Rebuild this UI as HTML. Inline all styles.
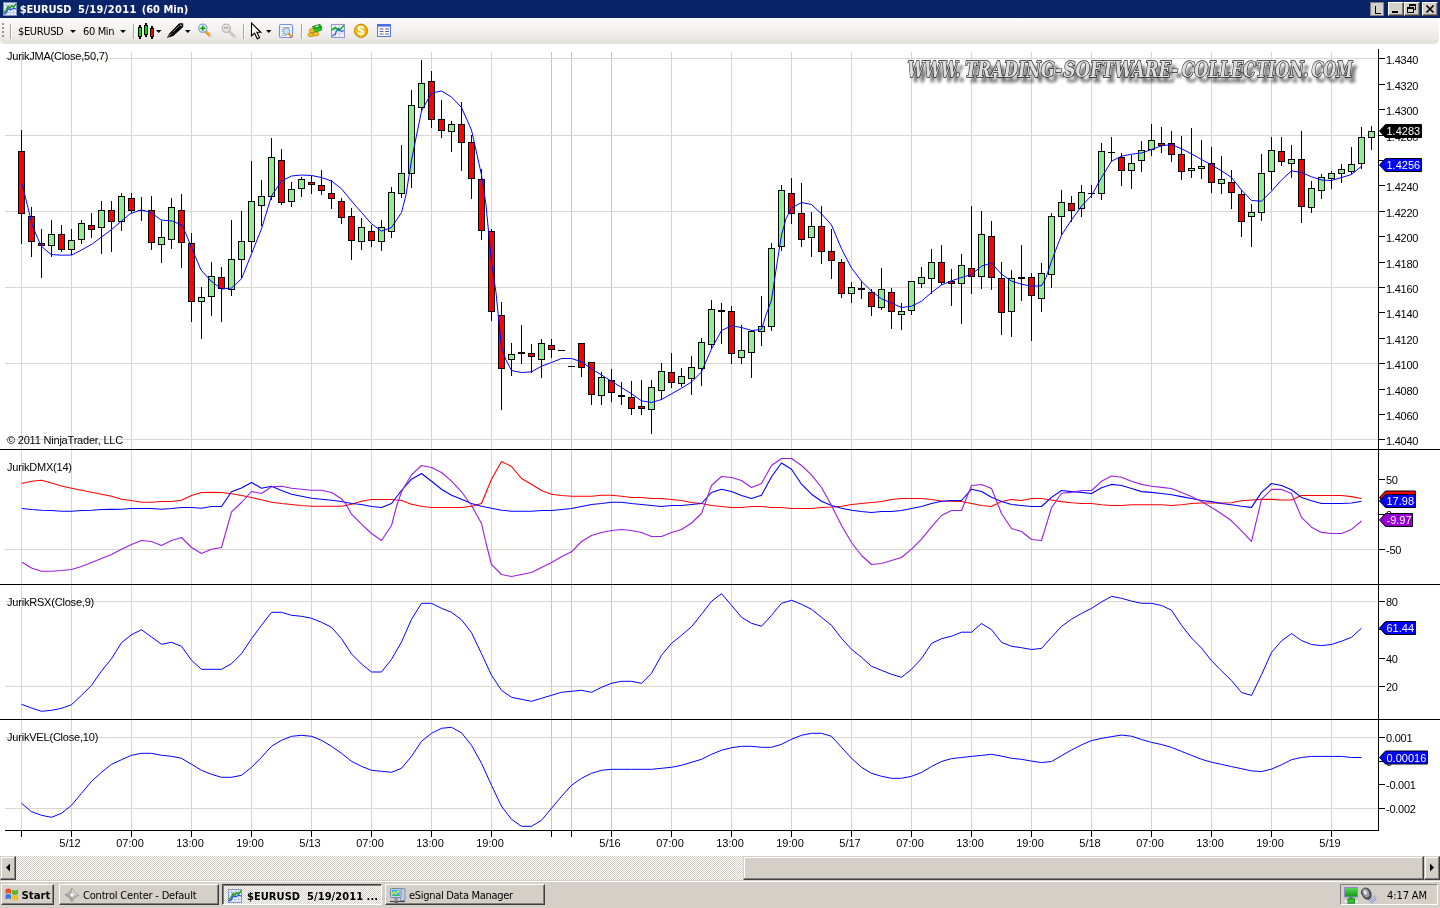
<!DOCTYPE html>
<html><head><meta charset="utf-8"><title>$EURUSD 5/19/2011 (60 Min)</title>
<style>
html,body{margin:0;padding:0;background:#fff;}
body{width:1440px;height:908px;position:relative;overflow:hidden;font-family:"Liberation Sans",Arial,sans-serif;font-size:11px;color:#000}
.abs{position:absolute}
#title,#tool,#task,#sb{will-change:transform}
#title{left:0;top:0;width:1440px;height:18px;background:#0a246a;color:#fff;font-weight:bold;}
#title .t{position:absolute;left:19.5px;top:3px;font-family:"DejaVu Sans Condensed","Liberation Sans",sans-serif;font-size:11px;line-height:14px;white-space:pre;letter-spacing:0.13px}
.cb{position:absolute;top:2px;height:14px;background:#d4d0c8;box-sizing:border-box;border:1px solid;border-color:#fff #404040 #404040 #fff;box-shadow:inset -1px -1px 0 #808080}
#tool{left:0;top:18px;width:1439px;height:26px;background:linear-gradient(#fcfbfb 0%,#f5f3f2 40%,#ebe8e5 78%,#e2ded9 100%);border-radius:0 0 5px 5px;}
.tt{position:absolute;top:7px;font-family:"DejaVu Sans Condensed","Liberation Sans",sans-serif;font-size:11px;line-height:14px;white-space:pre;letter-spacing:-0.35px}
.dd{position:absolute;top:12px;width:0;height:0;border-left:3px solid transparent;border-right:3px solid transparent;border-top:3px solid #000}
.sep{position:absolute;top:6px;width:1px;height:15px;background:#a9a59d;box-shadow:1px 0 0 #fff}
#sb{left:0;top:856px;width:1440px;height:24px;background-color:#d4d0c8;background-image:conic-gradient(#fff 25%,#d4d0c8 0 50%,#fff 0 75%,#d4d0c8 0);background-size:2px 2px}
#task{left:0;top:880px;width:1440px;height:28px;background:#d4d0c8;border-top:1px solid #d4d0c8;box-shadow:inset 0 1px 0 #fff;box-sizing:border-box}
.btn{position:absolute;top:3px;height:21px;box-sizing:border-box;background:#d4d0c8;border:1px solid;border-color:#fff #404040 #404040 #fff;box-shadow:inset -1px -1px 0 #808080;font-family:"DejaVu Sans Condensed","Liberation Sans",sans-serif;font-size:11px;line-height:14px;letter-spacing:-0.2px;white-space:pre}
.btn span{position:absolute;top:4px}
.raised{background:#d4d0c8;box-sizing:border-box;border:1px solid;border-color:#d4d0c8 #404040 #404040 #d4d0c8;box-shadow:inset -1px -1px 0 #808080,inset 1px 1px 0 #fff}
</style></head><body>
<svg id="chart" width="1440" height="908" viewBox="0 0 1440 908" style="position:absolute;left:0;top:0;will-change:transform">
<g shape-rendering="crispEdges" fill="#dbd5d0">
<rect x="21" y="52" width="1" height="778"/>
<rect x="71" y="52" width="1" height="778"/>
<rect x="131" y="52" width="1" height="778"/>
<rect x="191" y="52" width="1" height="778"/>
<rect x="251" y="52" width="1" height="778"/>
<rect x="311" y="52" width="1" height="778"/>
<rect x="371" y="52" width="1" height="778"/>
<rect x="431" y="52" width="1" height="778"/>
<rect x="491" y="52" width="1" height="778"/>
<rect x="551" y="52" width="1" height="778" fill="#c7c5cb"/>
<rect x="571" y="52" width="1" height="778" fill="#c7c5cb"/>
<rect x="611" y="52" width="1" height="778" fill="#c7c5cb"/>
<rect x="671" y="52" width="1" height="778"/>
<rect x="731" y="52" width="1" height="778"/>
<rect x="791" y="52" width="1" height="778"/>
<rect x="851" y="52" width="1" height="778"/>
<rect x="911" y="52" width="1" height="778"/>
<rect x="971" y="52" width="1" height="778"/>
<rect x="1031" y="52" width="1" height="778"/>
<rect x="1091" y="52" width="1" height="778"/>
<rect x="1151" y="52" width="1" height="778"/>
<rect x="1211" y="52" width="1" height="778"/>
<rect x="1271" y="52" width="1" height="778"/>
<rect x="1331" y="52" width="1" height="778"/>
<rect x="5" y="58" width="1373" height="1"/>
<rect x="5" y="135" width="1373" height="1"/>
<rect x="5" y="211" width="1373" height="1"/>
<rect x="5" y="287" width="1373" height="1"/>
<rect x="5" y="363" width="1373" height="1"/>
<rect x="5" y="439" width="1373" height="1"/>
<rect x="5" y="549" width="1373" height="1"/>
<rect x="5" y="601" width="1373" height="1"/>
<rect x="5" y="686" width="1373" height="1"/>
<rect x="5" y="737" width="1373" height="1"/>
<rect x="5" y="808" width="1373" height="1"/>
</g>
<g shape-rendering="crispEdges" fill="#000">
<rect x="0" y="449" width="1440" height="1"/>
<rect x="0" y="584" width="1440" height="1"/>
<rect x="0" y="719" width="1440" height="1"/>
<rect x="5" y="830" width="1374" height="1"/>
<rect x="1378" y="49" width="1" height="782"/>
<rect x="21" y="831" width="1" height="6"/>
<rect x="71" y="831" width="1" height="6"/>
<rect x="131" y="831" width="1" height="6"/>
<rect x="191" y="831" width="1" height="6"/>
<rect x="251" y="831" width="1" height="6"/>
<rect x="311" y="831" width="1" height="6"/>
<rect x="371" y="831" width="1" height="6"/>
<rect x="431" y="831" width="1" height="6"/>
<rect x="491" y="831" width="1" height="6"/>
<rect x="551" y="831" width="1" height="6"/>
<rect x="571" y="831" width="1" height="6"/>
<rect x="611" y="831" width="1" height="6"/>
<rect x="671" y="831" width="1" height="6"/>
<rect x="731" y="831" width="1" height="6"/>
<rect x="791" y="831" width="1" height="6"/>
<rect x="851" y="831" width="1" height="6"/>
<rect x="911" y="831" width="1" height="6"/>
<rect x="971" y="831" width="1" height="6"/>
<rect x="1031" y="831" width="1" height="6"/>
<rect x="1091" y="831" width="1" height="6"/>
<rect x="1151" y="831" width="1" height="6"/>
<rect x="1211" y="831" width="1" height="6"/>
<rect x="1271" y="831" width="1" height="6"/>
<rect x="1331" y="831" width="1" height="6"/>
<rect x="1379" y="58" width="6" height="1"/>
<rect x="1379" y="84" width="6" height="1"/>
<rect x="1379" y="109" width="6" height="1"/>
<rect x="1379" y="135" width="6" height="1"/>
<rect x="1379" y="160" width="6" height="1"/>
<rect x="1379" y="185" width="6" height="1"/>
<rect x="1379" y="211" width="6" height="1"/>
<rect x="1379" y="236" width="6" height="1"/>
<rect x="1379" y="262" width="6" height="1"/>
<rect x="1379" y="287" width="6" height="1"/>
<rect x="1379" y="312" width="6" height="1"/>
<rect x="1379" y="338" width="6" height="1"/>
<rect x="1379" y="363" width="6" height="1"/>
<rect x="1379" y="389" width="6" height="1"/>
<rect x="1379" y="414" width="6" height="1"/>
<rect x="1379" y="439" width="6" height="1"/>
<rect x="1379" y="479" width="6" height="1"/>
<rect x="1379" y="514" width="6" height="1"/>
<rect x="1379" y="549" width="6" height="1"/>
<rect x="1379" y="601" width="6" height="1"/>
<rect x="1379" y="629" width="6" height="1"/>
<rect x="1379" y="658" width="6" height="1"/>
<rect x="1379" y="686" width="6" height="1"/>
<rect x="1379" y="737" width="6" height="1"/>
<rect x="1379" y="761" width="6" height="1"/>
<rect x="1379" y="784" width="6" height="1"/>
<rect x="1379" y="808" width="6" height="1"/>
</g>
<g shape-rendering="crispEdges">
<rect x="21" y="130" width="1" height="114" fill="#000"/>
<rect x="18" y="151" width="7" height="63" fill="#000"/>
<rect x="19" y="152" width="5" height="61" fill="#f00"/>
<rect x="31" y="207" width="1" height="50" fill="#000"/>
<rect x="28" y="216" width="7" height="26" fill="#000"/>
<rect x="29" y="217" width="5" height="24" fill="#f00"/>
<rect x="41" y="229" width="1" height="49" fill="#000"/>
<rect x="38" y="243" width="7" height="3" fill="#000"/>
<rect x="39" y="244" width="5" height="1" fill="#f00"/>
<rect x="51" y="220" width="1" height="37" fill="#000"/>
<rect x="48" y="234" width="7" height="12" fill="#000"/>
<rect x="49" y="235" width="5" height="10" fill="#90ee90"/>
<rect x="61" y="225" width="1" height="27" fill="#000"/>
<rect x="58" y="234" width="7" height="16" fill="#000"/>
<rect x="59" y="235" width="5" height="14" fill="#f00"/>
<rect x="71" y="229" width="1" height="26" fill="#000"/>
<rect x="68" y="240" width="7" height="10" fill="#000"/>
<rect x="69" y="241" width="5" height="8" fill="#90ee90"/>
<rect x="81" y="220" width="1" height="24" fill="#000"/>
<rect x="78" y="223" width="7" height="17" fill="#000"/>
<rect x="79" y="224" width="5" height="15" fill="#90ee90"/>
<rect x="91" y="213" width="1" height="25" fill="#000"/>
<rect x="88" y="225" width="7" height="5" fill="#000"/>
<rect x="89" y="226" width="5" height="3" fill="#f00"/>
<rect x="101" y="201" width="1" height="53" fill="#000"/>
<rect x="98" y="210" width="7" height="18" fill="#000"/>
<rect x="99" y="211" width="5" height="16" fill="#90ee90"/>
<rect x="111" y="201" width="1" height="51" fill="#000"/>
<rect x="108" y="210" width="7" height="12" fill="#000"/>
<rect x="109" y="211" width="5" height="10" fill="#f00"/>
<rect x="121" y="193" width="1" height="38" fill="#000"/>
<rect x="118" y="196" width="7" height="26" fill="#000"/>
<rect x="119" y="197" width="5" height="24" fill="#90ee90"/>
<rect x="131" y="193" width="1" height="20" fill="#000"/>
<rect x="128" y="198" width="7" height="13" fill="#000"/>
<rect x="129" y="199" width="5" height="11" fill="#f00"/>
<rect x="141" y="197" width="1" height="24" fill="#000"/>
<rect x="138" y="210" width="7" height="1" fill="#000"/>
<rect x="151" y="196" width="1" height="54" fill="#000"/>
<rect x="148" y="210" width="7" height="33" fill="#000"/>
<rect x="149" y="211" width="5" height="31" fill="#f00"/>
<rect x="161" y="221" width="1" height="42" fill="#000"/>
<rect x="158" y="237" width="7" height="8" fill="#000"/>
<rect x="159" y="238" width="5" height="6" fill="#90ee90"/>
<rect x="171" y="198" width="1" height="51" fill="#000"/>
<rect x="168" y="207" width="7" height="33" fill="#000"/>
<rect x="169" y="208" width="5" height="31" fill="#90ee90"/>
<rect x="181" y="194" width="1" height="74" fill="#000"/>
<rect x="178" y="210" width="7" height="33" fill="#000"/>
<rect x="179" y="211" width="5" height="31" fill="#f00"/>
<rect x="191" y="233" width="1" height="89" fill="#000"/>
<rect x="188" y="243" width="7" height="59" fill="#000"/>
<rect x="189" y="244" width="5" height="57" fill="#f00"/>
<rect x="201" y="287" width="1" height="52" fill="#000"/>
<rect x="198" y="297" width="7" height="5" fill="#000"/>
<rect x="199" y="298" width="5" height="3" fill="#90ee90"/>
<rect x="211" y="262" width="1" height="54" fill="#000"/>
<rect x="208" y="276" width="7" height="21" fill="#000"/>
<rect x="209" y="277" width="5" height="19" fill="#90ee90"/>
<rect x="221" y="267" width="1" height="55" fill="#000"/>
<rect x="218" y="277" width="7" height="12" fill="#000"/>
<rect x="219" y="278" width="5" height="10" fill="#f00"/>
<rect x="231" y="220" width="1" height="76" fill="#000"/>
<rect x="228" y="259" width="7" height="31" fill="#000"/>
<rect x="229" y="260" width="5" height="29" fill="#90ee90"/>
<rect x="241" y="211" width="1" height="67" fill="#000"/>
<rect x="238" y="241" width="7" height="19" fill="#000"/>
<rect x="239" y="242" width="5" height="17" fill="#90ee90"/>
<rect x="251" y="161" width="1" height="91" fill="#000"/>
<rect x="248" y="201" width="7" height="41" fill="#000"/>
<rect x="249" y="202" width="5" height="39" fill="#90ee90"/>
<rect x="261" y="180" width="1" height="46" fill="#000"/>
<rect x="258" y="196" width="7" height="10" fill="#000"/>
<rect x="259" y="197" width="5" height="8" fill="#90ee90"/>
<rect x="271" y="138" width="1" height="62" fill="#000"/>
<rect x="268" y="157" width="7" height="40" fill="#000"/>
<rect x="269" y="158" width="5" height="38" fill="#90ee90"/>
<rect x="281" y="149" width="1" height="56" fill="#000"/>
<rect x="278" y="160" width="7" height="43" fill="#000"/>
<rect x="279" y="161" width="5" height="41" fill="#f00"/>
<rect x="291" y="182" width="1" height="25" fill="#000"/>
<rect x="288" y="189" width="7" height="13" fill="#000"/>
<rect x="289" y="190" width="5" height="11" fill="#90ee90"/>
<rect x="301" y="177" width="1" height="20" fill="#000"/>
<rect x="298" y="179" width="7" height="10" fill="#000"/>
<rect x="299" y="180" width="5" height="8" fill="#90ee90"/>
<rect x="311" y="176" width="1" height="18" fill="#000"/>
<rect x="308" y="182" width="7" height="3" fill="#000"/>
<rect x="309" y="183" width="5" height="1" fill="#f00"/>
<rect x="321" y="170" width="1" height="25" fill="#000"/>
<rect x="318" y="185" width="7" height="6" fill="#000"/>
<rect x="319" y="186" width="5" height="4" fill="#f00"/>
<rect x="331" y="180" width="1" height="29" fill="#000"/>
<rect x="328" y="193" width="7" height="6" fill="#000"/>
<rect x="329" y="194" width="5" height="4" fill="#f00"/>
<rect x="341" y="198" width="1" height="26" fill="#000"/>
<rect x="338" y="201" width="7" height="17" fill="#000"/>
<rect x="339" y="202" width="5" height="15" fill="#f00"/>
<rect x="351" y="208" width="1" height="52" fill="#000"/>
<rect x="348" y="216" width="7" height="25" fill="#000"/>
<rect x="349" y="217" width="5" height="23" fill="#f00"/>
<rect x="361" y="218" width="1" height="32" fill="#000"/>
<rect x="358" y="227" width="7" height="15" fill="#000"/>
<rect x="359" y="228" width="5" height="13" fill="#90ee90"/>
<rect x="371" y="225" width="1" height="22" fill="#000"/>
<rect x="368" y="231" width="7" height="10" fill="#000"/>
<rect x="369" y="232" width="5" height="8" fill="#f00"/>
<rect x="381" y="220" width="1" height="31" fill="#000"/>
<rect x="378" y="227" width="7" height="15" fill="#000"/>
<rect x="379" y="228" width="5" height="13" fill="#90ee90"/>
<rect x="391" y="187" width="1" height="51" fill="#000"/>
<rect x="388" y="192" width="7" height="40" fill="#000"/>
<rect x="389" y="193" width="5" height="38" fill="#90ee90"/>
<rect x="401" y="145" width="1" height="53" fill="#000"/>
<rect x="398" y="173" width="7" height="21" fill="#000"/>
<rect x="399" y="174" width="5" height="19" fill="#90ee90"/>
<rect x="411" y="90" width="1" height="98" fill="#000"/>
<rect x="408" y="105" width="7" height="69" fill="#000"/>
<rect x="409" y="106" width="5" height="67" fill="#90ee90"/>
<rect x="421" y="60" width="1" height="51" fill="#000"/>
<rect x="418" y="83" width="7" height="25" fill="#000"/>
<rect x="419" y="84" width="5" height="23" fill="#90ee90"/>
<rect x="431" y="71" width="1" height="57" fill="#000"/>
<rect x="428" y="81" width="7" height="39" fill="#000"/>
<rect x="429" y="82" width="5" height="37" fill="#f00"/>
<rect x="441" y="100" width="1" height="38" fill="#000"/>
<rect x="438" y="119" width="7" height="12" fill="#000"/>
<rect x="439" y="120" width="5" height="10" fill="#f00"/>
<rect x="451" y="121" width="1" height="31" fill="#000"/>
<rect x="448" y="124" width="7" height="8" fill="#000"/>
<rect x="449" y="125" width="5" height="6" fill="#90ee90"/>
<rect x="461" y="102" width="1" height="69" fill="#000"/>
<rect x="458" y="124" width="7" height="19" fill="#000"/>
<rect x="459" y="125" width="5" height="17" fill="#f00"/>
<rect x="471" y="135" width="1" height="64" fill="#000"/>
<rect x="468" y="142" width="7" height="37" fill="#000"/>
<rect x="469" y="143" width="5" height="35" fill="#f00"/>
<rect x="481" y="169" width="1" height="71" fill="#000"/>
<rect x="478" y="179" width="7" height="52" fill="#000"/>
<rect x="479" y="180" width="5" height="50" fill="#f00"/>
<rect x="491" y="229" width="1" height="92" fill="#000"/>
<rect x="488" y="231" width="7" height="81" fill="#000"/>
<rect x="489" y="232" width="5" height="79" fill="#f00"/>
<rect x="501" y="302" width="1" height="108" fill="#000"/>
<rect x="498" y="315" width="7" height="54" fill="#000"/>
<rect x="499" y="316" width="5" height="52" fill="#f00"/>
<rect x="511" y="343" width="1" height="33" fill="#000"/>
<rect x="508" y="354" width="7" height="6" fill="#000"/>
<rect x="509" y="355" width="5" height="4" fill="#90ee90"/>
<rect x="521" y="325" width="1" height="39" fill="#000"/>
<rect x="518" y="352" width="7" height="2" fill="#000"/>
<rect x="531" y="344" width="1" height="29" fill="#000"/>
<rect x="528" y="353" width="7" height="4" fill="#000"/>
<rect x="529" y="354" width="5" height="2" fill="#f00"/>
<rect x="541" y="339" width="1" height="39" fill="#000"/>
<rect x="538" y="343" width="7" height="17" fill="#000"/>
<rect x="539" y="344" width="5" height="15" fill="#90ee90"/>
<rect x="551" y="339" width="1" height="19" fill="#000"/>
<rect x="548" y="345" width="7" height="5" fill="#000"/>
<rect x="549" y="346" width="5" height="3" fill="#f00"/>
<rect x="558" y="350" width="7" height="1" fill="#000"/>
<rect x="568" y="366" width="7" height="1" fill="#000"/>
<rect x="581" y="343" width="1" height="34" fill="#000"/>
<rect x="578" y="343" width="7" height="25" fill="#000"/>
<rect x="579" y="344" width="5" height="23" fill="#f00"/>
<rect x="591" y="362" width="1" height="43" fill="#000"/>
<rect x="588" y="362" width="7" height="33" fill="#000"/>
<rect x="589" y="363" width="5" height="31" fill="#f00"/>
<rect x="601" y="372" width="1" height="33" fill="#000"/>
<rect x="598" y="377" width="7" height="19" fill="#000"/>
<rect x="599" y="378" width="5" height="17" fill="#90ee90"/>
<rect x="611" y="369" width="1" height="33" fill="#000"/>
<rect x="608" y="380" width="7" height="13" fill="#000"/>
<rect x="609" y="381" width="5" height="11" fill="#f00"/>
<rect x="621" y="382" width="1" height="23" fill="#000"/>
<rect x="618" y="395" width="7" height="2" fill="#000"/>
<rect x="631" y="381" width="1" height="34" fill="#000"/>
<rect x="628" y="397" width="7" height="12" fill="#000"/>
<rect x="629" y="398" width="5" height="10" fill="#f00"/>
<rect x="641" y="380" width="1" height="35" fill="#000"/>
<rect x="638" y="406" width="7" height="3" fill="#000"/>
<rect x="639" y="407" width="5" height="1" fill="#f00"/>
<rect x="651" y="380" width="1" height="54" fill="#000"/>
<rect x="648" y="387" width="7" height="23" fill="#000"/>
<rect x="649" y="388" width="5" height="21" fill="#90ee90"/>
<rect x="661" y="363" width="1" height="37" fill="#000"/>
<rect x="658" y="371" width="7" height="20" fill="#000"/>
<rect x="659" y="372" width="5" height="18" fill="#90ee90"/>
<rect x="671" y="353" width="1" height="35" fill="#000"/>
<rect x="668" y="372" width="7" height="11" fill="#000"/>
<rect x="669" y="373" width="5" height="9" fill="#f00"/>
<rect x="681" y="368" width="1" height="19" fill="#000"/>
<rect x="678" y="376" width="7" height="8" fill="#000"/>
<rect x="679" y="377" width="5" height="6" fill="#90ee90"/>
<rect x="691" y="356" width="1" height="39" fill="#000"/>
<rect x="688" y="367" width="7" height="12" fill="#000"/>
<rect x="689" y="368" width="5" height="10" fill="#90ee90"/>
<rect x="701" y="338" width="1" height="48" fill="#000"/>
<rect x="698" y="342" width="7" height="27" fill="#000"/>
<rect x="699" y="343" width="5" height="25" fill="#90ee90"/>
<rect x="711" y="300" width="1" height="49" fill="#000"/>
<rect x="708" y="309" width="7" height="36" fill="#000"/>
<rect x="709" y="310" width="5" height="34" fill="#90ee90"/>
<rect x="721" y="303" width="1" height="41" fill="#000"/>
<rect x="718" y="310" width="7" height="2" fill="#000"/>
<rect x="731" y="306" width="1" height="58" fill="#000"/>
<rect x="728" y="311" width="7" height="43" fill="#000"/>
<rect x="729" y="312" width="5" height="41" fill="#f00"/>
<rect x="741" y="325" width="1" height="39" fill="#000"/>
<rect x="738" y="350" width="7" height="8" fill="#000"/>
<rect x="739" y="351" width="5" height="6" fill="#90ee90"/>
<rect x="751" y="330" width="1" height="48" fill="#000"/>
<rect x="748" y="331" width="7" height="22" fill="#000"/>
<rect x="749" y="332" width="5" height="20" fill="#90ee90"/>
<rect x="761" y="296" width="1" height="50" fill="#000"/>
<rect x="758" y="326" width="7" height="6" fill="#000"/>
<rect x="759" y="327" width="5" height="4" fill="#90ee90"/>
<rect x="771" y="243" width="1" height="88" fill="#000"/>
<rect x="768" y="248" width="7" height="79" fill="#000"/>
<rect x="769" y="249" width="5" height="77" fill="#90ee90"/>
<rect x="781" y="185" width="1" height="66" fill="#000"/>
<rect x="778" y="190" width="7" height="57" fill="#000"/>
<rect x="779" y="191" width="5" height="55" fill="#90ee90"/>
<rect x="791" y="178" width="1" height="46" fill="#000"/>
<rect x="788" y="193" width="7" height="21" fill="#000"/>
<rect x="789" y="194" width="5" height="19" fill="#f00"/>
<rect x="801" y="183" width="1" height="64" fill="#000"/>
<rect x="798" y="213" width="7" height="27" fill="#000"/>
<rect x="799" y="214" width="5" height="25" fill="#f00"/>
<rect x="811" y="212" width="1" height="45" fill="#000"/>
<rect x="808" y="226" width="7" height="12" fill="#000"/>
<rect x="809" y="227" width="5" height="10" fill="#90ee90"/>
<rect x="821" y="206" width="1" height="58" fill="#000"/>
<rect x="818" y="226" width="7" height="26" fill="#000"/>
<rect x="819" y="227" width="5" height="24" fill="#f00"/>
<rect x="831" y="229" width="1" height="50" fill="#000"/>
<rect x="828" y="251" width="7" height="10" fill="#000"/>
<rect x="829" y="252" width="5" height="8" fill="#f00"/>
<rect x="841" y="259" width="1" height="39" fill="#000"/>
<rect x="838" y="262" width="7" height="32" fill="#000"/>
<rect x="839" y="263" width="5" height="30" fill="#f00"/>
<rect x="851" y="282" width="1" height="21" fill="#000"/>
<rect x="848" y="287" width="7" height="7" fill="#000"/>
<rect x="849" y="288" width="5" height="5" fill="#90ee90"/>
<rect x="861" y="281" width="1" height="18" fill="#000"/>
<rect x="858" y="288" width="7" height="2" fill="#000"/>
<rect x="871" y="289" width="1" height="27" fill="#000"/>
<rect x="868" y="292" width="7" height="15" fill="#000"/>
<rect x="869" y="293" width="5" height="13" fill="#f00"/>
<rect x="881" y="268" width="1" height="42" fill="#000"/>
<rect x="878" y="289" width="7" height="19" fill="#000"/>
<rect x="879" y="290" width="5" height="17" fill="#90ee90"/>
<rect x="891" y="288" width="1" height="41" fill="#000"/>
<rect x="888" y="292" width="7" height="20" fill="#000"/>
<rect x="889" y="293" width="5" height="18" fill="#f00"/>
<rect x="901" y="303" width="1" height="27" fill="#000"/>
<rect x="898" y="311" width="7" height="4" fill="#000"/>
<rect x="899" y="312" width="5" height="2" fill="#90ee90"/>
<rect x="911" y="281" width="1" height="34" fill="#000"/>
<rect x="908" y="281" width="7" height="30" fill="#000"/>
<rect x="909" y="282" width="5" height="28" fill="#90ee90"/>
<rect x="921" y="267" width="1" height="21" fill="#000"/>
<rect x="918" y="277" width="7" height="7" fill="#000"/>
<rect x="919" y="278" width="5" height="5" fill="#90ee90"/>
<rect x="931" y="249" width="1" height="45" fill="#000"/>
<rect x="928" y="262" width="7" height="17" fill="#000"/>
<rect x="929" y="263" width="5" height="15" fill="#90ee90"/>
<rect x="941" y="245" width="1" height="40" fill="#000"/>
<rect x="938" y="262" width="7" height="21" fill="#000"/>
<rect x="939" y="263" width="5" height="19" fill="#f00"/>
<rect x="951" y="269" width="1" height="37" fill="#000"/>
<rect x="948" y="281" width="7" height="3" fill="#000"/>
<rect x="949" y="282" width="5" height="1" fill="#f00"/>
<rect x="961" y="254" width="1" height="70" fill="#000"/>
<rect x="958" y="265" width="7" height="19" fill="#000"/>
<rect x="959" y="266" width="5" height="17" fill="#90ee90"/>
<rect x="971" y="206" width="1" height="88" fill="#000"/>
<rect x="968" y="268" width="7" height="9" fill="#000"/>
<rect x="969" y="269" width="5" height="7" fill="#f00"/>
<rect x="981" y="211" width="1" height="78" fill="#000"/>
<rect x="978" y="234" width="7" height="43" fill="#000"/>
<rect x="979" y="235" width="5" height="41" fill="#90ee90"/>
<rect x="991" y="221" width="1" height="69" fill="#000"/>
<rect x="988" y="236" width="7" height="42" fill="#000"/>
<rect x="989" y="237" width="5" height="40" fill="#f00"/>
<rect x="1001" y="262" width="1" height="73" fill="#000"/>
<rect x="998" y="278" width="7" height="35" fill="#000"/>
<rect x="999" y="279" width="5" height="33" fill="#f00"/>
<rect x="1011" y="270" width="1" height="67" fill="#000"/>
<rect x="1008" y="278" width="7" height="34" fill="#000"/>
<rect x="1009" y="279" width="5" height="32" fill="#90ee90"/>
<rect x="1021" y="245" width="1" height="56" fill="#000"/>
<rect x="1018" y="277" width="7" height="2" fill="#000"/>
<rect x="1031" y="273" width="1" height="68" fill="#000"/>
<rect x="1028" y="277" width="7" height="19" fill="#000"/>
<rect x="1029" y="278" width="5" height="17" fill="#f00"/>
<rect x="1041" y="263" width="1" height="49" fill="#000"/>
<rect x="1038" y="273" width="7" height="26" fill="#000"/>
<rect x="1039" y="274" width="5" height="24" fill="#90ee90"/>
<rect x="1051" y="213" width="1" height="75" fill="#000"/>
<rect x="1048" y="216" width="7" height="59" fill="#000"/>
<rect x="1049" y="217" width="5" height="57" fill="#90ee90"/>
<rect x="1061" y="190" width="1" height="45" fill="#000"/>
<rect x="1058" y="202" width="7" height="15" fill="#000"/>
<rect x="1059" y="203" width="5" height="13" fill="#90ee90"/>
<rect x="1071" y="196" width="1" height="26" fill="#000"/>
<rect x="1068" y="203" width="7" height="8" fill="#000"/>
<rect x="1069" y="204" width="5" height="6" fill="#f00"/>
<rect x="1081" y="185" width="1" height="32" fill="#000"/>
<rect x="1078" y="192" width="7" height="17" fill="#000"/>
<rect x="1079" y="193" width="5" height="15" fill="#90ee90"/>
<rect x="1091" y="185" width="1" height="13" fill="#000"/>
<rect x="1088" y="193" width="7" height="1" fill="#000"/>
<rect x="1101" y="143" width="1" height="57" fill="#000"/>
<rect x="1098" y="151" width="7" height="43" fill="#000"/>
<rect x="1099" y="152" width="5" height="41" fill="#90ee90"/>
<rect x="1111" y="137" width="1" height="25" fill="#000"/>
<rect x="1108" y="152" width="7" height="1" fill="#000"/>
<rect x="1121" y="153" width="1" height="33" fill="#000"/>
<rect x="1118" y="157" width="7" height="14" fill="#000"/>
<rect x="1119" y="158" width="5" height="12" fill="#f00"/>
<rect x="1131" y="155" width="1" height="34" fill="#000"/>
<rect x="1128" y="163" width="7" height="8" fill="#000"/>
<rect x="1129" y="164" width="5" height="6" fill="#90ee90"/>
<rect x="1141" y="141" width="1" height="31" fill="#000"/>
<rect x="1138" y="150" width="7" height="11" fill="#000"/>
<rect x="1139" y="151" width="5" height="9" fill="#90ee90"/>
<rect x="1151" y="124" width="1" height="32" fill="#000"/>
<rect x="1148" y="140" width="7" height="10" fill="#000"/>
<rect x="1149" y="141" width="5" height="8" fill="#90ee90"/>
<rect x="1161" y="127" width="1" height="26" fill="#000"/>
<rect x="1158" y="143" width="7" height="3" fill="#000"/>
<rect x="1159" y="144" width="5" height="1" fill="#f00"/>
<rect x="1171" y="131" width="1" height="31" fill="#000"/>
<rect x="1168" y="143" width="7" height="12" fill="#000"/>
<rect x="1169" y="144" width="5" height="10" fill="#f00"/>
<rect x="1181" y="136" width="1" height="44" fill="#000"/>
<rect x="1178" y="154" width="7" height="18" fill="#000"/>
<rect x="1179" y="155" width="5" height="16" fill="#f00"/>
<rect x="1191" y="128" width="1" height="50" fill="#000"/>
<rect x="1188" y="168" width="7" height="3" fill="#000"/>
<rect x="1189" y="169" width="5" height="1" fill="#90ee90"/>
<rect x="1201" y="140" width="1" height="39" fill="#000"/>
<rect x="1198" y="166" width="7" height="3" fill="#000"/>
<rect x="1199" y="167" width="5" height="1" fill="#90ee90"/>
<rect x="1211" y="147" width="1" height="46" fill="#000"/>
<rect x="1208" y="163" width="7" height="20" fill="#000"/>
<rect x="1209" y="164" width="5" height="18" fill="#f00"/>
<rect x="1221" y="156" width="1" height="38" fill="#000"/>
<rect x="1218" y="179" width="7" height="5" fill="#000"/>
<rect x="1219" y="180" width="5" height="3" fill="#90ee90"/>
<rect x="1231" y="170" width="1" height="39" fill="#000"/>
<rect x="1228" y="182" width="7" height="11" fill="#000"/>
<rect x="1229" y="183" width="5" height="9" fill="#f00"/>
<rect x="1241" y="190" width="1" height="47" fill="#000"/>
<rect x="1238" y="194" width="7" height="28" fill="#000"/>
<rect x="1239" y="195" width="5" height="26" fill="#f00"/>
<rect x="1251" y="204" width="1" height="43" fill="#000"/>
<rect x="1248" y="212" width="7" height="5" fill="#000"/>
<rect x="1249" y="213" width="5" height="3" fill="#90ee90"/>
<rect x="1261" y="154" width="1" height="67" fill="#000"/>
<rect x="1258" y="173" width="7" height="40" fill="#000"/>
<rect x="1259" y="174" width="5" height="38" fill="#90ee90"/>
<rect x="1271" y="137" width="1" height="53" fill="#000"/>
<rect x="1268" y="150" width="7" height="22" fill="#000"/>
<rect x="1269" y="151" width="5" height="20" fill="#90ee90"/>
<rect x="1281" y="137" width="1" height="29" fill="#000"/>
<rect x="1278" y="151" width="7" height="11" fill="#000"/>
<rect x="1279" y="152" width="5" height="9" fill="#f00"/>
<rect x="1291" y="145" width="1" height="33" fill="#000"/>
<rect x="1288" y="159" width="7" height="5" fill="#000"/>
<rect x="1289" y="160" width="5" height="3" fill="#90ee90"/>
<rect x="1301" y="131" width="1" height="92" fill="#000"/>
<rect x="1298" y="159" width="7" height="48" fill="#000"/>
<rect x="1299" y="160" width="5" height="46" fill="#f00"/>
<rect x="1311" y="181" width="1" height="32" fill="#000"/>
<rect x="1308" y="188" width="7" height="20" fill="#000"/>
<rect x="1309" y="189" width="5" height="18" fill="#90ee90"/>
<rect x="1321" y="174" width="1" height="25" fill="#000"/>
<rect x="1318" y="177" width="7" height="14" fill="#000"/>
<rect x="1319" y="178" width="5" height="12" fill="#90ee90"/>
<rect x="1331" y="171" width="1" height="18" fill="#000"/>
<rect x="1328" y="173" width="7" height="6" fill="#000"/>
<rect x="1329" y="174" width="5" height="4" fill="#90ee90"/>
<rect x="1341" y="164" width="1" height="19" fill="#000"/>
<rect x="1338" y="169" width="7" height="5" fill="#000"/>
<rect x="1339" y="170" width="5" height="3" fill="#90ee90"/>
<rect x="1351" y="147" width="1" height="27" fill="#000"/>
<rect x="1348" y="164" width="7" height="8" fill="#000"/>
<rect x="1349" y="165" width="5" height="6" fill="#90ee90"/>
<rect x="1361" y="127" width="1" height="42" fill="#000"/>
<rect x="1358" y="137" width="7" height="27" fill="#000"/>
<rect x="1359" y="138" width="5" height="25" fill="#90ee90"/>
<rect x="1371" y="126" width="1" height="24" fill="#000"/>
<rect x="1368" y="131" width="7" height="7" fill="#000"/>
<rect x="1369" y="132" width="5" height="5" fill="#90ee90"/>
</g>
<polyline points="22.0,183.8 32.5,226.0 41.0,246.0 51.0,254.5 61.5,255.2 71.8,255.0 81.5,250.0 92.5,243.8 101.5,237.0 111.0,230.0 121.5,221.0 130.0,213.8 141.0,210.0 151.0,212.5 161.0,220.0 172.5,221.0 182.5,225.5 191.5,247.5 201.0,270.0 211.0,281.0 221.5,289.0 231.5,288.0 241.5,278.8 251.5,253.8 261.5,228.8 271.5,196.0 281.5,181.0 291.5,176.0 301.5,175.0 311.5,175.5 321.5,177.5 331.5,181.0 341.5,188.8 351.5,201.0 361.5,212.5 371.5,223.8 381.5,231.2 391.5,227.5 401.5,212.5 406.0,195.0 411.5,160.0 421.5,111.0 431.5,93.0 441.5,91.0 451.5,97.0 461.5,107.5 471.5,130.0 481.5,175.0 486.0,205.0 491.5,262.5 496.0,292.5 501.5,347.5 506.0,360.0 511.5,370.5 521.5,372.5 531.5,371.8 541.5,366.2 551.5,362.5 561.5,358.5 571.5,358.5 581.5,361.8 591.5,368.8 601.5,375.0 611.5,381.2 621.5,387.5 631.5,393.8 641.5,400.8 651.5,402.5 661.5,399.5 671.5,393.8 681.5,388.2 691.5,382.0 701.5,372.0 711.5,348.8 721.5,330.5 731.5,325.8 741.5,327.5 751.5,330.5 761.5,329.5 766.0,315.0 771.5,300.0 776.0,270.0 781.5,235.0 786.0,218.8 791.5,208.0 801.5,202.5 811.5,204.5 821.5,213.8 831.5,225.0 841.5,248.8 851.5,268.0 861.5,281.2 871.5,291.2 881.5,298.8 891.5,303.0 901.5,307.5 911.5,306.2 921.5,301.2 931.5,292.5 941.5,285.0 951.5,280.8 961.5,277.5 971.5,274.5 981.5,266.2 991.5,263.0 1001.5,274.2 1011.5,281.2 1021.5,284.2 1031.5,286.2 1041.5,285.8 1046.0,277.5 1051.5,261.2 1061.5,235.0 1071.5,220.0 1081.5,206.2 1091.5,195.5 1101.5,177.5 1111.5,161.2 1121.5,156.2 1131.5,154.2 1141.5,153.0 1151.5,149.5 1161.5,145.8 1171.5,144.5 1181.5,148.8 1191.5,153.8 1201.5,159.5 1211.5,165.0 1221.5,170.8 1231.5,177.5 1241.5,190.0 1251.5,200.5 1261.5,201.2 1271.5,191.2 1281.5,180.0 1291.5,170.8 1301.5,172.5 1311.5,176.8 1321.5,180.0 1331.5,180.5 1341.5,177.5 1351.5,174.5 1361.5,166.2" fill="none" stroke="#00f" stroke-width="1.0" stroke-linejoin="round"/>
<polyline points="22.0,483.5 31.5,481.2 41.5,480.2 51.5,483.0 61.5,486.0 71.5,488.2 81.5,490.2 91.5,492.2 101.5,494.2 111.5,496.2 121.5,499.2 131.5,500.5 141.5,502.2 151.5,502.2 161.5,501.5 171.5,501.5 181.5,500.2 191.5,495.5 201.5,492.5 211.5,492.2 221.5,492.5 231.5,493.8 241.5,495.5 251.5,497.5 261.5,499.8 271.5,502.2 281.5,503.5 291.5,504.5 301.5,505.5 311.5,506.2 321.5,506.2 331.5,506.2 341.5,506.2 351.5,504.2 361.5,501.2 371.5,499.5 381.5,499.5 391.5,499.5 401.5,500.5 411.5,504.2 421.5,506.2 431.5,507.5 441.5,507.5 451.5,507.5 461.5,507.5 471.5,506.2 481.5,503.5 491.5,479.2 501.5,461.5 511.5,466.5 521.5,478.5 531.5,484.2 541.5,490.5 551.5,494.2 561.5,495.5 571.5,496.2 581.5,496.2 591.5,496.2 601.5,495.2 611.5,495.2 621.5,496.2 631.5,497.5 641.5,497.5 651.5,498.5 661.5,498.5 671.5,499.5 681.5,500.5 691.5,502.5 701.5,503.5 711.5,505.5 721.5,506.5 731.5,507.5 741.5,507.5 751.5,506.5 761.5,506.5 771.5,507.5 781.5,507.5 791.5,508.5 801.5,508.5 811.5,508.5 821.5,507.5 831.5,507.0 841.5,506.2 851.5,504.5 861.5,503.5 871.5,502.5 881.5,501.5 891.5,499.5 901.5,498.5 911.5,498.5 921.5,498.5 931.5,499.5 941.5,501.0 951.5,501.2 961.5,501.5 971.5,503.5 981.5,505.5 991.5,506.5 1001.5,501.5 1011.5,499.5 1021.5,500.5 1031.5,498.5 1041.5,498.5 1051.5,500.0 1061.5,501.6 1071.5,502.7 1081.5,503.5 1091.5,503.5 1101.5,504.7 1111.5,505.5 1121.5,505.5 1131.5,504.7 1141.5,504.7 1151.5,504.7 1161.5,504.7 1171.5,505.5 1181.5,504.7 1191.5,503.5 1201.5,503.0 1211.5,503.0 1221.5,503.0 1231.5,502.7 1241.5,500.8 1251.5,500.0 1261.5,499.4 1271.5,499.4 1281.5,500.0 1291.5,500.0 1301.5,495.5 1311.5,495.5 1321.5,495.5 1331.5,495.5 1341.5,495.5 1351.5,496.6 1361.5,498.5" fill="none" stroke="#f00" stroke-width="1.1" stroke-linejoin="round"/>
<polyline points="22.0,508.5 31.5,509.5 41.5,510.2 51.5,510.5 61.5,511.2 71.5,511.2 81.5,510.5 91.5,510.2 101.5,509.5 111.5,509.4 121.5,509.2 131.5,508.5 141.5,508.5 151.5,508.5 161.5,509.2 171.5,508.5 181.5,507.5 191.5,507.5 201.5,508.2 211.5,506.5 221.5,506.5 231.5,491.8 241.5,488.0 251.5,482.5 261.5,488.2 271.5,486.2 281.5,490.5 291.5,494.2 301.5,496.2 311.5,498.2 321.5,499.2 331.5,500.2 341.5,501.5 351.5,503.5 361.5,504.5 371.5,506.5 381.5,507.5 391.5,503.5 401.5,490.5 411.5,479.2 421.5,473.5 431.5,481.2 441.5,489.2 451.5,495.2 461.5,499.2 471.5,503.5 481.5,506.2 491.5,508.2 501.5,510.2 511.5,511.2 521.5,511.2 531.5,511.2 541.5,510.5 551.5,510.5 561.5,509.5 571.5,508.5 581.5,506.5 591.5,504.5 601.5,503.5 611.5,502.2 621.5,502.2 631.5,503.5 641.5,504.5 651.5,505.5 661.5,506.5 671.5,505.5 681.5,505.5 691.5,504.5 701.5,503.5 711.5,492.5 721.5,489.2 731.5,491.5 741.5,495.5 751.5,498.5 761.5,495.2 771.5,476.8 781.5,463.0 791.5,469.2 801.5,484.2 811.5,494.2 821.5,501.2 831.5,505.5 841.5,508.2 851.5,510.2 861.5,511.5 871.5,512.5 881.5,511.5 891.5,511.5 901.5,510.5 911.5,508.5 921.5,506.5 931.5,503.5 941.5,501.2 951.5,500.5 961.5,500.5 971.5,489.2 981.5,491.5 991.5,497.2 1001.5,501.5 1011.5,504.5 1021.5,505.5 1031.5,506.5 1041.5,506.5 1051.5,497.4 1061.5,490.5 1071.5,491.6 1081.5,492.4 1091.5,493.5 1101.5,487.7 1111.5,484.4 1121.5,485.5 1131.5,488.5 1141.5,491.6 1151.5,492.4 1161.5,493.5 1171.5,494.7 1181.5,496.6 1191.5,498.5 1201.5,500.5 1211.5,501.6 1221.5,503.5 1231.5,504.7 1241.5,506.3 1251.5,507.4 1261.5,492.4 1271.5,483.5 1281.5,485.5 1291.5,489.7 1301.5,497.4 1311.5,500.8 1321.5,503.5 1331.5,503.5 1341.5,503.5 1351.5,503.0 1361.5,501.3" fill="none" stroke="#00f" stroke-width="1.1" stroke-linejoin="round"/>
<polyline points="22.0,562.2 31.5,568.0 41.5,571.2 51.5,571.2 61.5,570.5 71.5,569.5 81.5,566.5 91.5,562.5 101.5,558.5 111.5,554.5 121.5,549.2 131.5,544.5 141.5,540.5 151.5,541.5 161.5,545.5 171.5,540.5 181.5,537.5 191.5,547.5 201.5,553.5 211.5,549.2 221.5,547.5 231.5,511.8 241.5,502.5 251.5,491.5 261.5,493.5 271.5,486.8 281.5,486.2 291.5,488.2 301.5,489.2 311.5,490.2 321.5,490.2 331.5,492.5 341.5,498.8 346.0,504.2 351.5,514.2 361.5,524.2 371.5,533.5 381.5,540.5 391.5,525.5 396.0,508.0 401.5,491.8 411.5,474.8 421.5,465.5 431.5,467.5 441.5,472.5 451.5,481.2 461.5,491.8 471.5,505.5 481.5,523.5 486.0,543.0 491.5,564.5 501.5,574.5 511.5,576.5 521.5,574.5 531.5,572.5 541.5,567.5 551.5,562.5 561.5,556.8 571.5,551.8 581.5,541.5 591.5,535.5 601.5,532.5 611.5,530.5 621.5,529.5 631.5,530.5 641.5,532.5 651.5,536.5 661.5,536.5 671.5,532.5 681.5,529.5 691.5,523.0 701.5,513.5 711.5,485.5 721.5,476.5 731.5,477.5 741.5,480.5 751.5,487.5 761.5,483.5 771.5,465.5 781.5,458.5 791.5,458.5 801.5,465.5 811.5,474.8 821.5,487.5 831.5,505.5 841.5,525.5 851.5,542.5 861.5,555.5 871.5,564.5 881.5,563.5 891.5,560.5 901.5,557.5 911.5,549.2 921.5,539.2 931.5,526.8 941.5,515.5 951.5,510.5 961.5,510.5 971.5,485.5 981.5,484.5 991.5,488.5 1001.5,513.5 1011.5,528.5 1021.5,531.5 1031.5,539.5 1041.5,540.5 1051.5,507.7 1061.5,493.3 1071.5,492.4 1081.5,490.5 1091.5,490.5 1101.5,481.3 1111.5,476.0 1121.5,477.2 1131.5,481.3 1141.5,484.4 1151.5,486.3 1161.5,487.4 1171.5,488.5 1181.5,492.4 1191.5,496.6 1201.5,501.6 1211.5,507.4 1221.5,513.8 1231.5,520.8 1241.5,530.8 1251.5,541.3 1261.5,499.4 1271.5,489.4 1281.5,489.4 1291.5,493.5 1301.5,517.4 1311.5,527.2 1321.5,532.4 1331.5,533.5 1341.5,533.5 1351.5,529.4 1361.5,521.0" fill="none" stroke="#9a1fe0" stroke-width="1.1" stroke-linejoin="round"/>
<polyline points="21.5,704.3 31.5,708.0 41.5,711.3 51.5,710.3 61.5,708.3 71.5,704.7 81.5,695.3 91.5,685.3 101.5,671.0 111.5,658.7 121.5,642.7 131.5,634.7 141.5,629.7 151.5,637.0 161.5,644.3 171.5,642.3 181.5,646.3 191.5,660.3 201.5,669.3 211.5,669.3 221.5,669.3 231.5,663.7 241.5,653.7 251.5,638.7 261.5,625.3 271.5,612.3 281.5,612.3 291.5,615.3 301.5,616.3 311.5,618.3 321.5,622.3 331.5,627.3 341.5,638.7 351.5,654.0 361.5,664.0 371.5,672.0 381.5,672.0 391.5,659.3 401.5,642.0 411.5,619.3 421.5,603.3 431.5,603.3 441.5,608.3 451.5,612.3 461.5,619.8 471.5,632.7 481.5,653.7 491.5,675.3 501.5,690.3 511.5,697.3 521.5,699.3 531.5,701.3 541.5,698.3 551.5,695.3 561.5,692.3 571.5,691.3 581.5,690.3 591.5,692.3 601.5,687.3 611.5,683.3 621.5,681.3 631.5,681.3 641.5,683.3 651.5,673.3 661.5,655.3 671.5,643.3 681.5,635.3 691.5,626.7 701.5,614.3 711.5,601.3 721.5,593.7 731.5,605.3 741.5,617.3 751.5,623.3 761.5,626.3 771.5,615.3 781.5,603.3 791.5,600.3 801.5,604.3 811.5,609.3 821.5,617.3 831.5,625.3 841.5,638.3 851.5,649.3 861.5,657.3 871.5,666.3 881.5,670.3 891.5,674.3 901.5,677.3 911.5,669.3 921.5,658.6 931.5,643.4 941.5,638.7 951.5,636.2 961.5,632.2 971.5,632.2 981.5,623.5 991.5,629.7 1001.5,642.3 1011.5,646.3 1021.5,647.7 1031.5,649.5 1041.5,648.4 1051.5,637.3 1061.5,626.4 1071.5,619.2 1081.5,613.4 1091.5,608.4 1101.5,601.9 1111.5,596.4 1121.5,598.3 1131.5,601.1 1141.5,603.3 1151.5,603.3 1161.5,605.5 1171.5,610.2 1181.5,625.3 1191.5,638.0 1201.5,648.1 1211.5,660.7 1221.5,670.8 1231.5,680.6 1241.5,692.5 1251.5,695.4 1261.5,674.8 1271.5,652.4 1281.5,640.9 1291.5,633.6 1301.5,640.5 1311.5,644.5 1321.5,645.6 1331.5,644.5 1341.5,641.2 1351.5,637.3 1361.5,628.2" fill="none" stroke="#00f" stroke-width="1.0" stroke-linejoin="round"/>
<polyline points="21.5,803.3 31.5,811.7 41.5,815.3 51.5,817.3 61.5,813.3 71.5,805.3 81.5,793.3 91.5,781.3 101.5,772.3 111.5,764.3 121.5,759.7 131.5,755.3 141.5,753.3 151.5,753.3 161.5,755.3 171.5,756.3 181.5,758.3 191.5,764.3 201.5,770.3 211.5,774.3 221.5,777.3 231.5,777.3 241.5,775.3 251.5,767.3 261.5,757.3 271.5,746.3 281.5,740.3 291.5,736.3 301.5,735.3 311.5,736.3 321.5,740.3 331.5,746.3 341.5,753.3 351.5,761.3 361.5,766.3 371.5,770.3 381.5,771.3 391.5,772.3 401.5,768.3 411.5,756.3 421.5,741.3 431.5,733.3 441.5,728.3 451.5,727.3 461.5,732.8 471.5,745.3 481.5,763.3 491.5,785.3 501.5,806.3 511.5,819.3 521.5,826.3 531.5,826.3 541.5,820.3 551.5,808.3 561.5,796.3 571.5,785.3 581.5,778.3 591.5,773.3 601.5,770.3 611.5,769.3 621.5,769.3 631.5,769.3 641.5,769.3 651.5,769.3 661.5,768.3 671.5,767.3 681.5,765.3 691.5,762.3 701.5,759.3 711.5,754.3 721.5,750.3 731.5,747.7 741.5,746.3 751.5,746.3 761.5,747.3 771.5,747.3 781.5,744.3 791.5,739.3 801.5,735.3 811.5,733.3 821.5,733.3 831.5,736.3 841.5,747.3 851.5,758.3 861.5,767.3 871.5,773.3 881.5,776.3 891.5,778.3 901.5,778.3 911.5,776.3 921.5,772.5 931.5,766.5 941.5,761.5 951.5,758.6 961.5,757.5 971.5,756.4 981.5,755.4 991.5,754.3 1001.5,756.1 1011.5,758.3 1021.5,759.3 1031.5,761.1 1041.5,762.6 1051.5,761.5 1061.5,755.7 1071.5,750.0 1081.5,744.9 1091.5,740.6 1101.5,738.4 1111.5,736.6 1121.5,735.1 1131.5,736.2 1141.5,739.5 1151.5,742.4 1161.5,744.5 1171.5,747.4 1181.5,751.4 1191.5,755.4 1201.5,759.3 1211.5,762.2 1221.5,764.4 1231.5,766.6 1241.5,768.7 1251.5,770.9 1261.5,771.6 1271.5,769.1 1281.5,764.8 1291.5,759.7 1301.5,757.5 1311.5,756.4 1321.5,756.4 1331.5,756.4 1341.5,756.4 1351.5,757.5 1361.5,757.5" fill="none" stroke="#00f" stroke-width="1.0" stroke-linejoin="round"/>
<g font-family="Liberation Sans, Arial, sans-serif" font-size="11" fill="#000">
<text x="1386" y="63.6" letter-spacing="-0.25">1.4340</text>
<text x="1386" y="89.6" letter-spacing="-0.25">1.4320</text>
<text x="1386" y="114.6" letter-spacing="-0.25">1.4300</text>
<text x="1386" y="140.6" letter-spacing="-0.25">1.4280</text>
<text x="1386" y="165.6" letter-spacing="-0.25">1.4260</text>
<text x="1386" y="190.6" letter-spacing="-0.25">1.4240</text>
<text x="1386" y="216.6" letter-spacing="-0.25">1.4220</text>
<text x="1386" y="241.6" letter-spacing="-0.25">1.4200</text>
<text x="1386" y="267.6" letter-spacing="-0.25">1.4180</text>
<text x="1386" y="292.6" letter-spacing="-0.25">1.4160</text>
<text x="1386" y="317.6" letter-spacing="-0.25">1.4140</text>
<text x="1386" y="343.6" letter-spacing="-0.25">1.4120</text>
<text x="1386" y="368.6" letter-spacing="-0.25">1.4100</text>
<text x="1386" y="394.6" letter-spacing="-0.25">1.4080</text>
<text x="1386" y="419.6" letter-spacing="-0.25">1.4060</text>
<text x="1386" y="444.6" letter-spacing="-0.25">1.4040</text>
<text x="1386" y="484" letter-spacing="-0.25">50</text>
<text x="1386" y="519" letter-spacing="-0.25">0</text>
<text x="1386" y="554" letter-spacing="-0.25">-50</text>
<text x="1386" y="606" letter-spacing="-0.25">80</text>
<text x="1386" y="663" letter-spacing="-0.25">40</text>
<text x="1386" y="691" letter-spacing="-0.25">20</text>
<text x="1386" y="742" letter-spacing="-0.25">0.001</text>
<text x="1386" y="766" letter-spacing="-0.25">0</text>
<text x="1386" y="789" letter-spacing="-0.25">-0.001</text>
<text x="1386" y="813" letter-spacing="-0.25">-0.002</text>
<text x="70" y="847" text-anchor="middle">5/12</text>
<text x="130" y="847" text-anchor="middle">07:00</text>
<text x="190" y="847" text-anchor="middle">13:00</text>
<text x="250" y="847" text-anchor="middle">19:00</text>
<text x="310" y="847" text-anchor="middle">5/13</text>
<text x="370" y="847" text-anchor="middle">07:00</text>
<text x="430" y="847" text-anchor="middle">13:00</text>
<text x="490" y="847" text-anchor="middle">19:00</text>
<text x="610" y="847" text-anchor="middle">5/16</text>
<text x="670" y="847" text-anchor="middle">07:00</text>
<text x="730" y="847" text-anchor="middle">13:00</text>
<text x="790" y="847" text-anchor="middle">19:00</text>
<text x="850" y="847" text-anchor="middle">5/17</text>
<text x="910" y="847" text-anchor="middle">07:00</text>
<text x="970" y="847" text-anchor="middle">13:00</text>
<text x="1030" y="847" text-anchor="middle">19:00</text>
<text x="1090" y="847" text-anchor="middle">5/18</text>
<text x="1150" y="847" text-anchor="middle">07:00</text>
<text x="1210" y="847" text-anchor="middle">13:00</text>
<text x="1270" y="847" text-anchor="middle">19:00</text>
<text x="1330" y="847" text-anchor="middle">5/19</text>
<text x="7" y="60" letter-spacing="-0.2">JurikJMA(Close,50,7)</text>
<text x="7" y="444" letter-spacing="-0.2">© 2011 NinjaTrader, LLC</text>
<text x="7" y="471" letter-spacing="-0.2">JurikDMX(14)</text>
<text x="7" y="606" letter-spacing="-0.2">JurikRSX(Close,9)</text>
<text x="7" y="741" letter-spacing="-0.2">JurikVEL(Close,10)</text>
</g>
<polygon points="1379.5,131 1385.5,124.5 1421.5,124.5 1421.5,137.5 1385.5,137.5" fill="#000" stroke="#000" stroke-width="1"/>
<text x="1386.5" y="135" font-family="Liberation Sans, Arial, sans-serif" font-size="11" fill="#fff">1.4283</text>
<polygon points="1379.5,165 1385.5,158.5 1421.5,158.5 1421.5,171.5 1385.5,171.5" fill="#00f" stroke="#000" stroke-width="1"/>
<text x="1386.5" y="169" font-family="Liberation Sans, Arial, sans-serif" font-size="11" fill="#fff">1.4256</text>
<polygon points="1379.5,497.5 1385.5,491.0 1415.5,491.0 1415.5,504.0 1385.5,504.0" fill="#f00" stroke="#000" stroke-width="1"/>
<text x="1386.5" y="501.5" font-family="Liberation Sans, Arial, sans-serif" font-size="11" fill="#fff"></text>
<polygon points="1379.5,501 1385.5,494.5 1415.5,494.5 1415.5,507.5 1385.5,507.5" fill="#00f" stroke="#000" stroke-width="1"/>
<text x="1386.5" y="505" font-family="Liberation Sans, Arial, sans-serif" font-size="11" fill="#fff">17.98</text>
<polygon points="1379.5,520 1385.5,513.5 1412.5,513.5 1412.5,526.5 1385.5,526.5" fill="#9400d3" stroke="#000" stroke-width="1"/>
<text x="1386.5" y="524" font-family="Liberation Sans, Arial, sans-serif" font-size="11" fill="#fff">-9.97</text>
<polygon points="1379.5,628 1385.5,621.5 1415.5,621.5 1415.5,634.5 1385.5,634.5" fill="#00f" stroke="#000" stroke-width="1"/>
<text x="1386.5" y="632" font-family="Liberation Sans, Arial, sans-serif" font-size="11" fill="#fff">61.44</text>
<polygon points="1379.5,757.5 1385.5,751.0 1427.5,751.0 1427.5,764.0 1385.5,764.0" fill="#00f" stroke="#000" stroke-width="1"/>
<text x="1386.5" y="761.5" font-family="Liberation Sans, Arial, sans-serif" font-size="11" fill="#fff">0.00016</text>
<defs><filter id="sh" x="-5%" y="-50%" width="110%" height="250%"><feGaussianBlur stdDeviation="1.8"/></filter></defs>
<g fill="#222" stroke="#222" stroke-width="1.2" opacity="0.62" filter="url(#sh)">
<text x="911.5" y="81.5" font-family="DejaVu Serif Condensed, DejaVu Serif, Liberation Serif, serif" font-weight="bold" font-style="italic" font-size="21.5" lengthAdjust="spacingAndGlyphs" textLength="53">WWW.</text>
<text x="969" y="81.5" font-family="DejaVu Serif Condensed, DejaVu Serif, Liberation Serif, serif" font-weight="bold" font-style="italic" font-size="21.5" lengthAdjust="spacingAndGlyphs" textLength="97">TRADING-</text>
<text x="1067.5" y="81.5" font-family="DejaVu Serif Condensed, DejaVu Serif, Liberation Serif, serif" font-weight="bold" font-style="italic" font-size="21.5" lengthAdjust="spacingAndGlyphs" textLength="115">SOFTWARE-</text>
<text x="1185.5" y="81.5" font-family="DejaVu Serif Condensed, DejaVu Serif, Liberation Serif, serif" font-weight="bold" font-style="italic" font-size="21.5" lengthAdjust="spacingAndGlyphs" textLength="127">COLLECTION.</text>
<text x="1315.5" y="81.5" font-family="DejaVu Serif Condensed, DejaVu Serif, Liberation Serif, serif" font-weight="bold" font-style="italic" font-size="21.5" lengthAdjust="spacingAndGlyphs" textLength="41">COM</text>
</g>
<g fill="#dedede" stroke="#1a1a1a" stroke-width="1.3" paint-order="stroke fill">
<text x="907.5" y="76.5" font-family="DejaVu Serif Condensed, DejaVu Serif, Liberation Serif, serif" font-weight="bold" font-style="italic" font-size="21.5" lengthAdjust="spacingAndGlyphs" textLength="53">WWW.</text>
<text x="965" y="76.5" font-family="DejaVu Serif Condensed, DejaVu Serif, Liberation Serif, serif" font-weight="bold" font-style="italic" font-size="21.5" lengthAdjust="spacingAndGlyphs" textLength="97">TRADING-</text>
<text x="1063.5" y="76.5" font-family="DejaVu Serif Condensed, DejaVu Serif, Liberation Serif, serif" font-weight="bold" font-style="italic" font-size="21.5" lengthAdjust="spacingAndGlyphs" textLength="115">SOFTWARE-</text>
<text x="1181.5" y="76.5" font-family="DejaVu Serif Condensed, DejaVu Serif, Liberation Serif, serif" font-weight="bold" font-style="italic" font-size="21.5" lengthAdjust="spacingAndGlyphs" textLength="127">COLLECTION.</text>
<text x="1311.5" y="76.5" font-family="DejaVu Serif Condensed, DejaVu Serif, Liberation Serif, serif" font-weight="bold" font-style="italic" font-size="21.5" lengthAdjust="spacingAndGlyphs" textLength="41">COM</text>
</g>
</svg>
<div id="title" class="abs">
<svg class="abs" style="left:3px;top:2px" width="14" height="14" viewBox="0 0 16 16"><rect x="0.5" y="0.5" width="15" height="15" fill="#e8ecf8" stroke="#7a8fc0"/><path d="M4 1v14M8 1v14M12 1v14M1 4h14M1 8h14M1 12h14" stroke="#b8c4e0" stroke-width="1"/><polyline points="1,12 4,9 6,5 8,7 10,4 12,6 15,2" fill="none" stroke="#1a9a1a" stroke-width="1.6"/><polyline points="1,14 4,12 6,8 9,9 12,7 15,8" fill="none" stroke="#2050d0" stroke-width="1.3"/></svg>
<span class="t" style="left:19.7px;letter-spacing:-0.15px">$EURUSD  </span><span class="t" style="left:78px;letter-spacing:0.37px">5/19/2011 </span><span class="t" style="left:141.7px;letter-spacing:0">(60 Min)</span>
<div class="cb" style="left:1370px;width:14px;border-color:#808080;box-shadow:none"><svg width="12" height="12" style="position:absolute;left:0;top:0"><g shape-rendering="crispEdges"><rect x="4" y="3" width="1" height="8" fill="#000"/><rect x="4" y="10" width="6" height="1" fill="#000"/></g></svg></div>
<div class="cb" style="left:1388px;width:16px"><svg width="14" height="12" style="position:absolute;left:0;top:0"><rect x="3" y="8" width="6" height="2" fill="#000"/></svg></div>
<div class="cb" style="left:1404px;width:16px"><svg width="14" height="12" style="position:absolute;left:0;top:0" shape-rendering="crispEdges"><rect x="4.5" y="1.5" width="6" height="5" fill="none" stroke="#000"/><rect x="4" y="1" width="7" height="2" fill="#000"/><rect x="2.5" y="4.5" width="6" height="5" fill="#d4d0c8" stroke="#000"/><rect x="2" y="4" width="7" height="2" fill="#000"/></svg></div>
<div class="cb" style="left:1422px;width:16px"><svg width="14" height="12" style="position:absolute;left:0;top:0"><path d="M3.5 2.5l7 7M10.5 2.5l-7 7" stroke="#000" stroke-width="1.7"/></svg></div>
</div>
<div id="tool" class="abs">
<svg class="abs" style="left:2px;top:4px" width="3" height="18"><g fill="#9a968e"><rect x="0" y="1" width="2" height="2"/><rect x="0" y="5" width="2" height="2"/><rect x="0" y="9" width="2" height="2"/><rect x="0" y="13" width="2" height="2"/></g></svg>
<div class="sep" style="left:10px"></div>
<span class="tt" style="left:18px">$EURUSD</span><div class="dd" style="left:70px"></div>
<span class="tt" style="left:83px">60 Min</span><div class="dd" style="left:120px"></div>
<div class="sep" style="left:133px"></div><div class="sep" style="left:243px"></div><div class="sep" style="left:301px"></div>
<svg class="abs" style="left:136px;top:3px" width="260" height="22" viewBox="136 21 260 22">
<g shape-rendering="crispEdges"><rect x="139" y="25" width="2" height="14" fill="#000"/><rect x="138" y="27" width="4" height="10" fill="#000"/><rect x="139" y="28" width="2" height="8" fill="#0d0"/>
<rect x="145" y="23" width="2" height="14" fill="#000"/><rect x="144" y="25" width="4" height="10" fill="#000"/><rect x="145" y="26" width="2" height="8" fill="#0d0"/>
<rect x="151" y="26" width="2" height="13" fill="#000"/><rect x="150" y="28" width="4" height="9" fill="#000"/><rect x="151" y="29" width="2" height="7" fill="#e00"/></g>
<polygon points="156,30 161.500,30 158.750,33" fill="#000"/>
<path d="M166.800 37.900 L169.300 33.400 L179.300 23.200 L183.200 23.200 L183.200 26.900 L173.200 36 Z" fill="#000"/><path d="M168.200 36.600 L171.200 33.600" stroke="#fff" stroke-width="0.700"/><path d="M172.500 32.500 L179.500 25.500" stroke="#ddd" stroke-width="0.600"/><path d="M180.300 24.600 l1.600 1.600" stroke="#999" stroke-width="1.400"/>
<polygon points="185,30 190.500,30 187.750,33" fill="#000"/>
<line x1="206.300" y1="32" x2="210.600" y2="36.300" stroke="#f08a1e" stroke-width="3" stroke-linecap="round"/><line x1="206.800" y1="31.600" x2="210.900" y2="35.700" stroke="#ffd84a" stroke-width="0.900"/><circle cx="210.700" cy="36.400" r="1.300" fill="#e4e8ee"/><circle cx="202.800" cy="28.300" r="4.100" fill="#c4e6f8" stroke="#8fa8c0" stroke-width="1.300"/><circle cx="202" cy="27.300" r="2.200" fill="#e6f6fe" opacity="0.800"/><path d="M200.300 28.300h5M202.800 25.800v5" stroke="#0a9a0a" stroke-width="1.500"/>
<line x1="229.800" y1="32" x2="234.100" y2="36.300" stroke="#cbc8c2" stroke-width="3" stroke-linecap="round"/><circle cx="226.300" cy="28.300" r="4.100" fill="#e6e4e0" stroke="#bdbab4" stroke-width="1.300"/><path d="M224 27.800h4.600" stroke="#aaa7a1" stroke-width="1.300"/>
<path d="M251.500 23 L251.500 36 L254.500 33.200 L257.300 38.800 L259.600 37.700 L256.900 32.300 L260.800 32.300 Z" fill="#fff" stroke="#000" stroke-width="1.100" stroke-linejoin="miter"/>
<polygon points="266,30 271.500,30 268.750,33" fill="#000"/>
<rect x="279.500" y="24.500" width="13" height="13" rx="1.800" fill="#fbfcff" stroke="#6f94e6" stroke-width="1.200"/><path d="M281.500 27.500h9M281.500 29.500h2M281.500 31.500h2M281.500 33.500h2M281.500 35.500h5" stroke="#9aa4b4" stroke-width="0.800"/><circle cx="286.500" cy="31.300" r="3.300" fill="#bfe3f7" stroke="#8a9db0" stroke-width="1"/><line x1="289.300" y1="34.200" x2="291.600" y2="36.600" stroke="#f0801e" stroke-width="2.400" stroke-linecap="round"/><line x1="289.600" y1="33.900" x2="291.800" y2="36.200" stroke="#ffd84a" stroke-width="0.800"/>
<path d="M312.500 26.500 l7.500 -2.200 l2 3.200 l-7.500 2.600z" fill="#18b818" stroke="#0c7a0c" stroke-width="0.700"/><path d="M312.800 29 l7.500 -2.200 l1.500 3.200 l-7.500 2.600z" fill="#22c822" stroke="#0c7a0c" stroke-width="0.700"/><path d="M315.500 26.800l3-0.900" stroke="#e8d8f8" stroke-width="1.400"/><ellipse cx="311.800" cy="30.800" rx="2.600" ry="2.200" fill="#f0c020" stroke="#a87c08" stroke-width="0.700"/><ellipse cx="311" cy="34.800" rx="3" ry="1.900" fill="#f0c020" stroke="#a87c08" stroke-width="0.700"/><ellipse cx="315.800" cy="34" rx="3" ry="1.900" fill="#f4c828" stroke="#a87c08" stroke-width="0.700"/>
<rect x="331.500" y="24.500" width="13" height="13" fill="#f4f2fc" stroke="#9a9cc8" stroke-width="1.100"/><path d="M335.500 25v12M339.500 25v12M332 29.500h12M332 33.500h12" stroke="#d4d4ec" stroke-width="1"/><polyline points="332,30 335,27.800 336.500,28.500 338.500,30.500 341,28.500 344,25.500" fill="none" stroke="#10b010" stroke-width="1.600"/><polyline points="332,36 335,34.500 336.500,31 338.500,28.300 340,30.300 341.500,31.500 344,30.500" fill="none" stroke="#2a6ae0" stroke-width="1.300"/>
<circle cx="361" cy="30.800" r="6.700" fill="#f0b000" stroke="#b88600" stroke-width="0.900"/><circle cx="360.300" cy="29.800" r="4.800" fill="#fcd040" opacity="0.550"/><text x="361" y="35.300" text-anchor="middle" font-family="Liberation Sans, Arial, sans-serif" font-weight="bold" font-size="12.500" fill="#fff">$</text>
<rect x="378" y="25" width="13" height="12" fill="#1c3a78"/><rect x="377.500" y="24.500" width="13" height="12" fill="#fffef8" stroke="#5a78d8" stroke-width="1"/><rect x="377" y="24" width="14" height="2.600" fill="#4a6ee8"/><path d="M379.500 29h4M385 29h4M379.500 31.500h4M385 31.500h4M379.500 34h4M385 34h4" stroke="#5a58b8" stroke-width="1"/>
</svg>
</div>
<div id="sb" class="abs">
<div class="abs raised" style="left:0;top:0;width:16px;height:24px"><svg width="14" height="21" style="position:absolute;left:0;top:0"><polygon points="9,6.500 9,14.500 5,10.500" fill="#000"/></svg></div>
<div class="abs raised" style="left:743px;top:0;width:681px;height:24px"></div>
<div class="abs raised" style="left:1424px;top:0;width:16px;height:24px"><svg width="14" height="21" style="position:absolute;left:0;top:0"><polygon points="5,6.500 5,14.500 9,10.500" fill="#000"/></svg></div>
</div>
<div id="task" class="abs">
<div class="btn" style="left:1px;width:53px;font-weight:bold"><svg width="16" height="16" style="position:absolute;left:2px;top:1px" viewBox="0 0 16 16"><path d="M1.500 3.500 q3 -2 5.500 0 v4.500 q-2.500 -2 -5.500 0z" fill="#e8502a"/><path d="M8 3.500 q3 2 6 0 v4.500 q-3 2 -6 0z" fill="#58b828"/><path d="M1.500 9 q3 -2 5.500 0 v4.500 q-2.500 -2 -5.500 0z" fill="#3878e0"/><path d="M8 9 q3 2 6 0 v4.500 q-3 2 -6 0z" fill="#f0c020"/></svg><span style="left:19.5px;letter-spacing:0;font-size:11.3px">Start</span></div>
<div class="btn" style="left:59px;width:160px"><svg width="16" height="16" style="position:absolute;left:4px;top:2px" viewBox="0 0 16 16"><path d="M8 1 Q9.5 6.5 15 8 Q9.5 9.5 8 15 Q6.5 9.5 1 8 Q6.5 6.5 8 1Z" fill="#b4b4b4" stroke="#8a8a8a" stroke-width="0.8"/><path d="M8 1 Q9.5 6.5 15 8 L8 8Z" fill="#dcdcdc"/><path d="M8 15 Q6.5 9.5 1 8 L8 8Z" fill="#9c9c9c"/><circle cx="8" cy="8" r="2.2" fill="#f8f8f8" stroke="#999" stroke-width="0.6"/></svg><span style="left:23px">Control Center - Default</span></div>
<div class="btn" style="left:222px;width:160px;font-weight:bold;border-color:#404040 #fff #fff #404040;box-shadow:inset 1px 1px 0 #808080;background-color:#d4d0c8;background-image:conic-gradient(#fff 25%,#d4d0c8 0 50%,#fff 0 75%,#d4d0c8 0);background-size:2px 2px"><svg style="position:absolute;left:5px;top:4px" width="14" height="14" viewBox="0 0 16 16"><rect x="0.500" y="0.500" width="15" height="15" fill="#e8ecf8" stroke="#7a8fc0"/><path d="M4 1v14M8 1v14M12 1v14M1 4h14M1 8h14M1 12h14" stroke="#b8c4e0" stroke-width="1"/><polyline points="1,12 4,9 6,5 8,7 10,4 12,6 15,2" fill="none" stroke="#1a9a1a" stroke-width="1.600"/><polyline points="1,14 4,12 6,8 9,9 12,7 15,8" fill="none" stroke="#2050d0" stroke-width="1.300"/></svg><span style="left:24px;top:5px;letter-spacing:0.06px">$EURUSD  5/19/2011 ...</span></div>
<div class="btn" style="left:385px;width:160px"><svg width="17" height="17" style="position:absolute;left:3px;top:2px" viewBox="0 0 17 17"><rect x="11.500" y="1.500" width="4.500" height="12" rx="0.800" fill="#c4cce4" stroke="#7080b0" stroke-width="0.800"/><rect x="1.500" y="1.500" width="10.500" height="9" rx="0.800" fill="#d8e0f4" stroke="#6878b0" stroke-width="0.900"/><rect x="2.800" y="2.800" width="8" height="6.300" fill="#30b8e8"/><path d="M3 7.500l2-2.500 2 1.500 2-2.500 1.800 1.200" fill="none" stroke="#e8e040" stroke-width="1.300"/><path d="M3 8.600h7.600" stroke="#40c040" stroke-width="1"/><rect x="5" y="10.800" width="4" height="2" fill="#8894b8"/><path d="M1 14.500h15" stroke="#444" stroke-width="1.200"/><rect x="6" y="13.500" width="3" height="2.500" fill="#666"/></svg><span style="left:23px;letter-spacing:-0.3px">eSignal Data Manager</span></div>
<div class="abs" style="left:1340px;top:3px;width:98px;height:21px;box-sizing:border-box;border:1px solid;border-color:#808080 #fff #fff #808080"><svg width="46" height="19" style="position:absolute;left:2px;top:0" viewBox="0 0 46 19"><defs><linearGradient id="gm" x1="0" y1="0" x2="0" y2="1"><stop offset="0" stop-color="#5ad85a"/><stop offset="1" stop-color="#149414"/></linearGradient></defs><rect x="1.5" y="2.5" width="13" height="9.500" fill="url(#gm)" stroke="#8c8cd8" stroke-width="1"/><rect x="6.500" y="12" width="3" height="2.500" fill="#22b022"/><rect x="0.800" y="15" width="15" height="3" rx="1.400" fill="#f2f2f2" stroke="#aaa" stroke-width="0.600"/><rect x="5" y="13.800" width="6.500" height="4.400" fill="#2ec82e" stroke="#147814" stroke-width="0.800"/><path d="M19.500 4.500 q-2.200 2.500 0 5.500" fill="none" stroke="#3c46b4" stroke-width="1.100"/><ellipse cx="23.600" cy="8.600" rx="4.800" ry="6.400" fill="#4a4a4a" transform="rotate(-24 23.600 8.600)"/><ellipse cx="23" cy="8" rx="3.300" ry="4.700" fill="#9a9aa2" transform="rotate(-24 23 8)"/><ellipse cx="22.300" cy="7.400" rx="1.500" ry="2.300" fill="#e8e8f0" transform="rotate(-24 22.300 7.400)"/><path d="M25.500 15.800 q4 -1.500 6 -5.500M26.500 17.300 q4.500 -1.700 6.500 -6M28 18.500 q4 -1.800 5.500 -5.500" stroke="#8c8cf0" fill="none" stroke-width="0.900"/></svg><span style="position:absolute;left:46px;top:4px;font-family:'DejaVu Sans Condensed','Liberation Sans',sans-serif;font-size:11px;line-height:14px;letter-spacing:-0.1px;white-space:pre">4:17 AM</span></div>
</div>
</body></html>
